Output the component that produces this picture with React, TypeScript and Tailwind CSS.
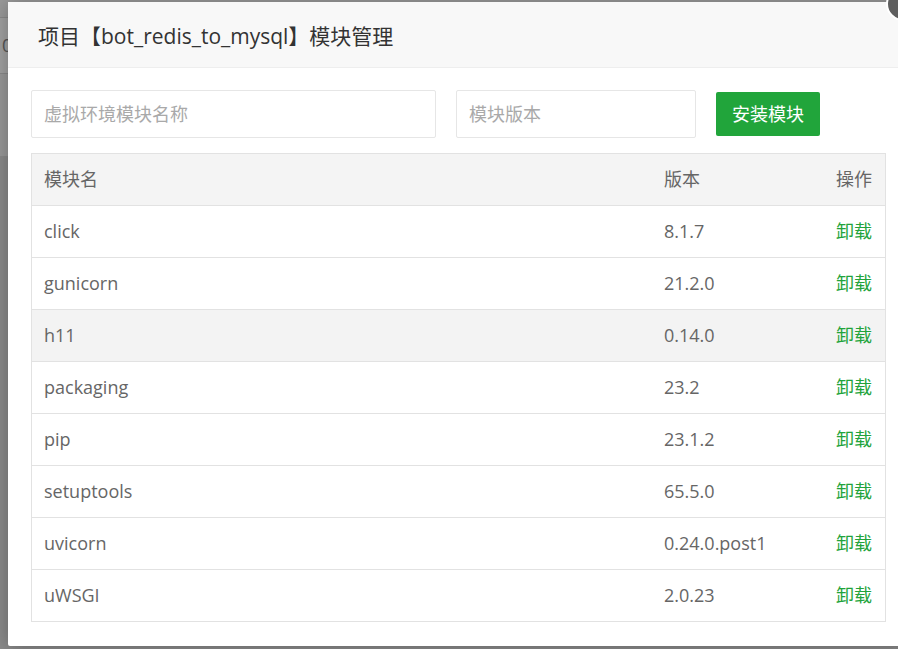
import React from "react";

const rows = [
  { name: "click", ver: "8.1.7" },
  { name: "gunicorn", ver: "21.2.0" },
  { name: "h11", ver: "0.14.0", hover: true },
  { name: "packaging", ver: "23.2" },
  { name: "pip", ver: "23.1.2" },
  { name: "setuptools", ver: "65.5.0" },
  { name: "uvicorn", ver: "0.24.0.post1" },
  { name: "uWSGI", ver: "2.0.23" },
];

export default function App() {
  return (
    <div className="relative h-[649px] w-[898px] overflow-hidden bg-[#8b8b8b] font-['Open_Sans','Noto_Sans_CJK_SC',sans-serif]">
      {/* page behind the overlay */}
      <div className="flex flex-col">
        <div className="h-[18px] border-b border-[#8a8a8a] bg-[#9a9a9a]" />
        <div className="flex h-[56px] items-center border-b border-[#8a8a8a] bg-[#a1a1a1] pl-[2px] text-[18px] text-[#555]">
          0
        </div>
        <div className="h-[82px] bg-[#999999]" />
      </div>

      {/* modal */}
      <div className="absolute left-[8px] top-[2px] flex h-[644px] w-[900px] flex-col rounded-[2px] bg-white shadow-[0_1px_20px_rgba(0,0,0,0.3)]">
        <div className="flex h-[66px] shrink-0 items-center border-b border-[#eeeeee] bg-[#f8f8f8] pl-[30px] pt-[5px] text-[21px] text-[#333]">
          项目【bot_redis_to_mysql】模块管理
        </div>
        <div className="flex flex-col px-[23px] pt-[22px]">
          <div className="flex items-center gap-[20px]">
            <div className="flex h-[48px] w-[405px] items-center rounded-[2px] border border-[#e6e6e6] px-[12px] text-[18px] text-[#a9a9a9]">
              虚拟环境模块名称
            </div>
            <div className="flex h-[48px] w-[240px] items-center rounded-[2px] border border-[#e6e6e6] px-[12px] text-[18px] text-[#a9a9a9]">
              模块版本
            </div>
            <div className="flex h-[44px] w-[104px] items-center justify-center rounded-[2px] bg-[#21a53b] text-[18px] text-white">
              安装模块
            </div>
          </div>

          <div className="mt-[15px] w-[855px] border border-[#e2e2e2] text-[18px] text-[#666]">
            <div className="flex h-[51px] items-center bg-[#f4f4f4]">
              <div className="w-[619px] pl-[12px]">模块名</div>
              <div className="flex-1 pl-[13px]">版本</div>
              <div className="pr-[13px]">操作</div>
            </div>
            {rows.map((r) => (
              <div
                key={r.name}
                className={`flex h-[52px] items-center border-t border-[#e2e2e2] ${r.hover ? "bg-[#f3f3f3]" : "bg-white"}`}
              >
                <div className="w-[619px] pl-[12px]">{r.name}</div>
                <div className="flex-1 pl-[13px]">{r.ver}</div>
                <div className="pr-[13px] text-[#22a33a]">卸载</div>
              </div>
            ))}
          </div>
        </div>
      </div>

      {/* close button */}
      <div className="absolute left-[886px] top-[-13px] h-[34px] w-[34px] rounded-full border-2 border-white bg-[#5f5f5f]" />
    </div>
  );
}
